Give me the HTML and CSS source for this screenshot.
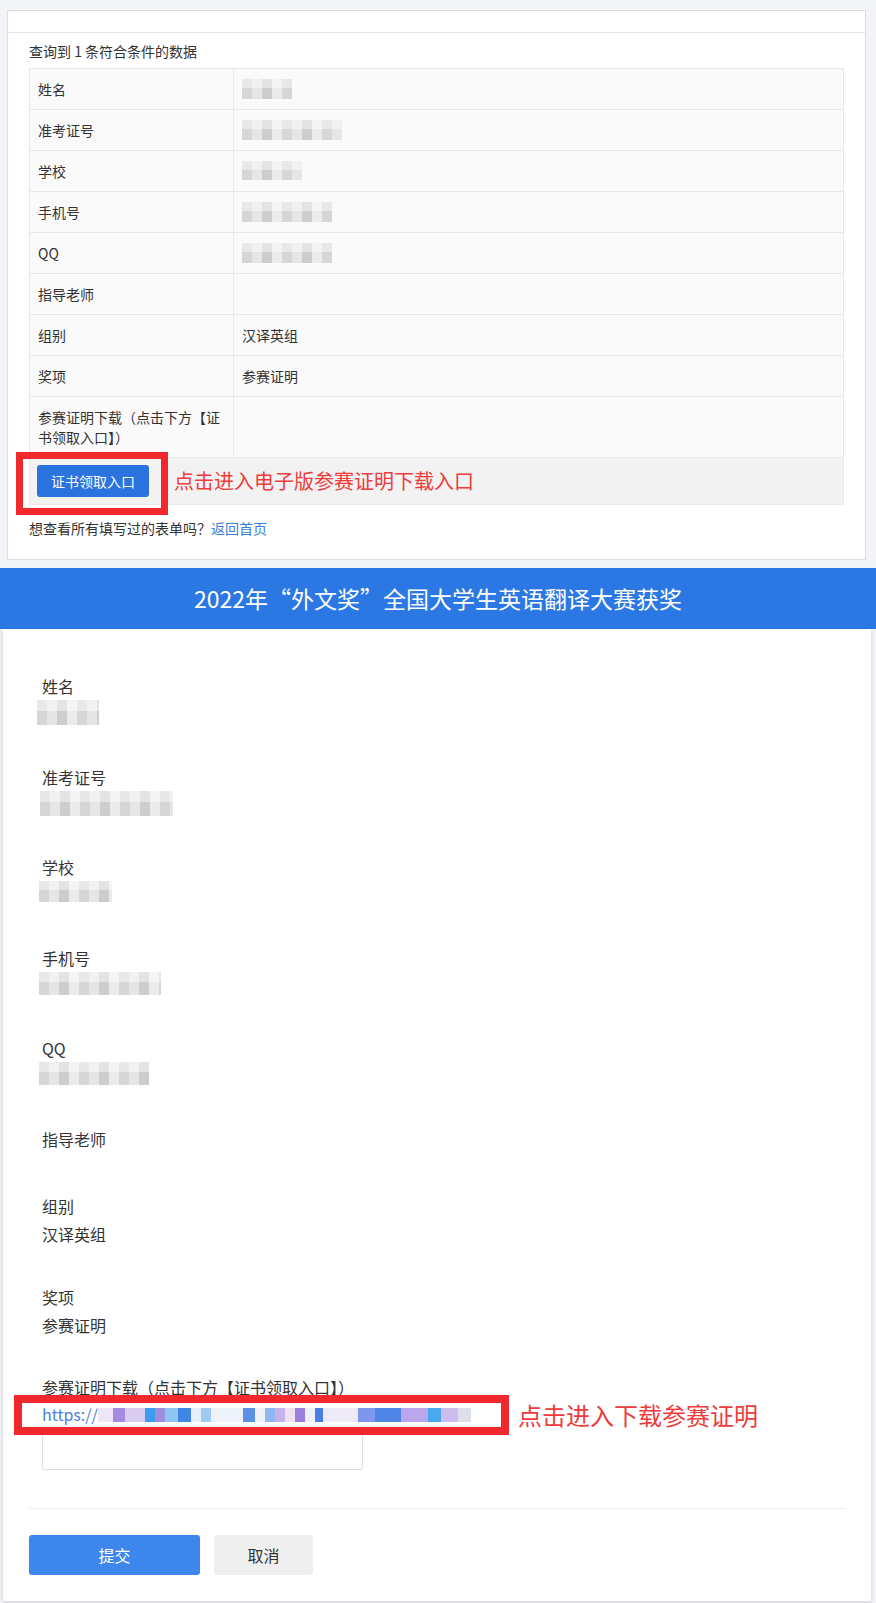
FILE: index.html
```html
<!DOCTYPE html>
<html lang="zh-CN">
<head>
  <meta charset="UTF-8">
  <meta name="viewport" content="width=device-width, initial-scale=1.0">
  <title>证书查询</title>
  <link rel="stylesheet" href="styles.css">
</head>
<body>
  <div class="result-card">
    <div class="result-head"></div>
    <div class="result-body">
      <p class="result-count">查询到 1 条符合条件的数据</p>
      <table class="result-table">
        <tr><td class="key">姓名</td><td><span class="mosaic m-name"></span></td></tr>
        <tr><td class="key">准考证号</td><td><span class="mosaic m-id"></span></td></tr>
        <tr><td class="key">学校</td><td><span class="mosaic m-school"></span></td></tr>
        <tr><td class="key">手机号</td><td><span class="mosaic m-phone"></span></td></tr>
        <tr><td class="key">QQ</td><td><span class="mosaic m-qq"></span></td></tr>
        <tr><td class="key">指导老师</td><td></td></tr>
        <tr><td class="key">组别</td><td>汉译英组</td></tr>
        <tr><td class="key">奖项</td><td>参赛证明</td></tr>
        <tr><td class="key">参赛证明下载（点击下方【证书领取入口】）</td><td></td></tr>
        <tr class="action-row">
          <td colspan="2">
            <div class="action">
              <span class="frame-wrap">
                <button class="btn-entry">证书领取入口</button>
                <span class="red-frame frame-entry"></span>
              </span>
              <span class="note note-entry">点击进入电子版参赛证明下载入口</span>
            </div>
          </td>
        </tr>
      </table>
      <p class="back-line">想查看所有填写过的表单吗？<a href="#">返回首页</a></p>
    </div>
  </div>

  <div class="form-title">2022年“外文奖”全国大学生英语翻译大赛获奖</div>

  <div class="form-card">
    <div class="fields">
      <div class="field">
        <div class="field-label">姓名</div>
        <div class="field-value"><span class="mosaic fm-name"></span></div>
      </div>
      <div class="field">
        <div class="field-label">准考证号</div>
        <div class="field-value"><span class="mosaic fm-id"></span></div>
      </div>
      <div class="field">
        <div class="field-label">学校</div>
        <div class="field-value"><span class="mosaic fm-school"></span></div>
      </div>
      <div class="field">
        <div class="field-label">手机号</div>
        <div class="field-value"><span class="mosaic fm-phone"></span></div>
      </div>
      <div class="field">
        <div class="field-label">QQ</div>
        <div class="field-value"><span class="mosaic fm-qq"></span></div>
      </div>
      <div class="field">
        <div class="field-label">指导老师</div>
        <div class="field-value"></div>
      </div>
      <div class="field">
        <div class="field-label">组别</div>
        <div class="field-value">汉译英组</div>
      </div>
      <div class="field">
        <div class="field-label">奖项</div>
        <div class="field-value">参赛证明</div>
      </div>
      <div class="field field-last">
        <div class="field-label">参赛证明下载（点击下方【证书领取入口】）</div>
        <div class="field-url">
          <a href="#" class="url-link">https://<span class="url-mosaic"></span></a>
          <span class="red-frame frame-url"></span>
          <span class="note note-url">点击进入下载参赛证明</span>
        </div>
        <textarea class="field-text"></textarea>
      </div>
    </div>
    <div class="form-actions">
      <button class="btn-submit">提交</button>
      <button class="btn-cancel">取消</button>
    </div>
  </div>
</body>
</html>
```

FILE: styles.css
```css
body {
  margin: 0;
  padding: 10px 0 4px;
  background-color: #f3f4f7;
  font-family: "Noto Sans CJK SC", "Noto Sans", sans-serif;
  color: #333;
}
p {
  margin: 0;
}

/* query result */
.result-card {
  margin: 0 10px 0 7px;
  background-color: white;
  border: 1px solid #dcdde0;
}
.result-head {
  height: 21px;
  border-bottom: 1px solid #e6e6e6;
}
.result-body {
  padding: 0 21px 21px;
  font-size: 14px;
  line-height: 20px;
}
.result-count {
  margin: 8px 0 7px;
}
.result-table {
  width: 100%;
  border-collapse: collapse;
  border: 1px solid #e8e8e8;
}
.result-table td {
  padding: 10px 8px;
  border: 1px solid #e8e8e8;
  background-color: #fafafa;
  vertical-align: top;
}
.result-table td.key {
  width: 187px;
}
.action-row td {
  padding: 7px;
  background-color: #f2f2f2;
}
.action {
  display: flex;
  align-items: center;
}
.frame-wrap {
  position: relative;
  display: inline-block;
}
.btn-entry {
  display: block;
  width: 112px;
  height: 32px;
  padding: 0;
  border: none;
  border-radius: 3px;
  background-color: #2b73df;
  color: white;
  font-family: inherit;
  font-size: 14px;
}
.red-frame {
  position: absolute;
  box-sizing: border-box;
  border: 7px solid #f0292f;
}
.frame-entry {
  left: -21px;
  top: -13px;
  width: 152px;
  height: 63px;
}
.note {
  color: #ee3b3b;
  white-space: nowrap;
}
.note-entry {
  margin-left: 25px;
  font-size: 20px;
}
.back-line {
  margin-top: 13px;
}
.back-line a {
  color: #3b7dd8;
  text-decoration: none;
}

/* blurred values */
.mosaic {
  display: inline-block;
  vertical-align: top;
  background-color: #e3e3e3;
  background-image:
    linear-gradient(180deg, rgba(255,255,255,.45) 0 45%, transparent 45%),
    repeating-linear-gradient(90deg, #d6d6d6 0 10px, #e6e6e6 10px 20px, #cdcdcd 20px 30px, #ebebeb 30px 40px);
  filter: blur(0.6px);
}
.m-name { width: 50px; height: 20px; }
.m-id { width: 100px; height: 20px; }
.m-school { width: 60px; height: 19px; }
.m-phone { width: 90px; height: 20px; }
.m-qq { width: 90px; height: 20px; }

/* form */
.form-title {
  margin-top: 8px;
  height: 61px;
  line-height: 61px;
  background-color: #2b78e4;
  color: white;
  font-size: 23px;
  text-align: center;
}
.form-card {
  margin: 0 5px 0 3px;
  padding: 43px 26px 26px;
  background-color: white;
  box-shadow: 0 1px 4px rgba(0,0,0,0.18);
}
.fields {
  padding: 0 13px 3px;
}
.field {
  margin-bottom: 34.5px;
  font-size: 16px;
}
.field-label,
.field-value {
  line-height: 28px;
}
.field-value {
  min-height: 5px;
}
.fm-name { width: 62px; height: 25px; margin-left: -5px; }
.fm-id { width: 133px; height: 25px; margin-left: -2px; }
.fm-school { width: 73px; height: 21px; margin-left: -3px; }
.fm-phone { width: 122px; height: 23px; margin-left: -3px; }
.fm-qq { width: 110px; height: 23px; margin-left: -3px; }
.field-url {
  position: relative;
  line-height: 26px;
}
.url-link {
  color: #4a7edb;
  text-decoration: none;
}
.url-mosaic {
  display: inline-block;
  width: 375px;
  height: 14px;
  vertical-align: -1px;
  background: linear-gradient(90deg,
    #ece6f6 0 15px, #a58be0 15px 27px, #d8cdf0 27px 47px, #3d9cf0 47px 57px,
    #9e8ee0 57px 67px, #8fc5f5 67px 80px, #3f86e6 80px 93px, #e8eef8 93px 103px,
    #9ccaf3 103px 113px, #eef3fa 113px 145px, #5a8fe6 145px 157px, #eef1f8 157px 167px,
    #8fb8f0 167px 177px, #c5b3ec 177px 187px, #f0e0f0 187px 197px, #9b7fe0 197px 207px,
    #eef1f8 207px 217px, #4c7fe6 217px 225px, #efeaf8 225px 260px, #7f96ee 260px 277px,
    #4f86e6 277px 303px, #b9a6ec 303px 330px, #49a9ee 330px 343px, #cdbcef 343px 360px,
    #dde0ea 360px 373px, transparent 373px);
}
.frame-url {
  left: -28px;
  top: -6px;
  width: 495px;
  height: 40px;
  border-width: 8px;
}
.note-url {
  position: absolute;
  left: 476px;
  top: -1px;
  font-size: 24px;
  line-height: 30px;
}
.field-text {
  display: block;
  box-sizing: border-box;
  width: 321px;
  height: 43px;
  border: 1px solid #ddd;
  border-radius: 3px;
  resize: none;
}
.form-actions {
  display: flex;
  gap: 14px;
  padding-top: 26px;
  border-top: 1px solid #eee;
}
.btn-submit,
.btn-cancel {
  height: 40px;
  padding: 0;
  border: none;
  border-radius: 3px;
  font-family: inherit;
  font-size: 16px;
}
.btn-submit {
  width: 171px;
  background-color: #3d86eb;
  color: white;
}
.btn-cancel {
  width: 99px;
  background-color: #efefef;
  color: #333;
}
```
